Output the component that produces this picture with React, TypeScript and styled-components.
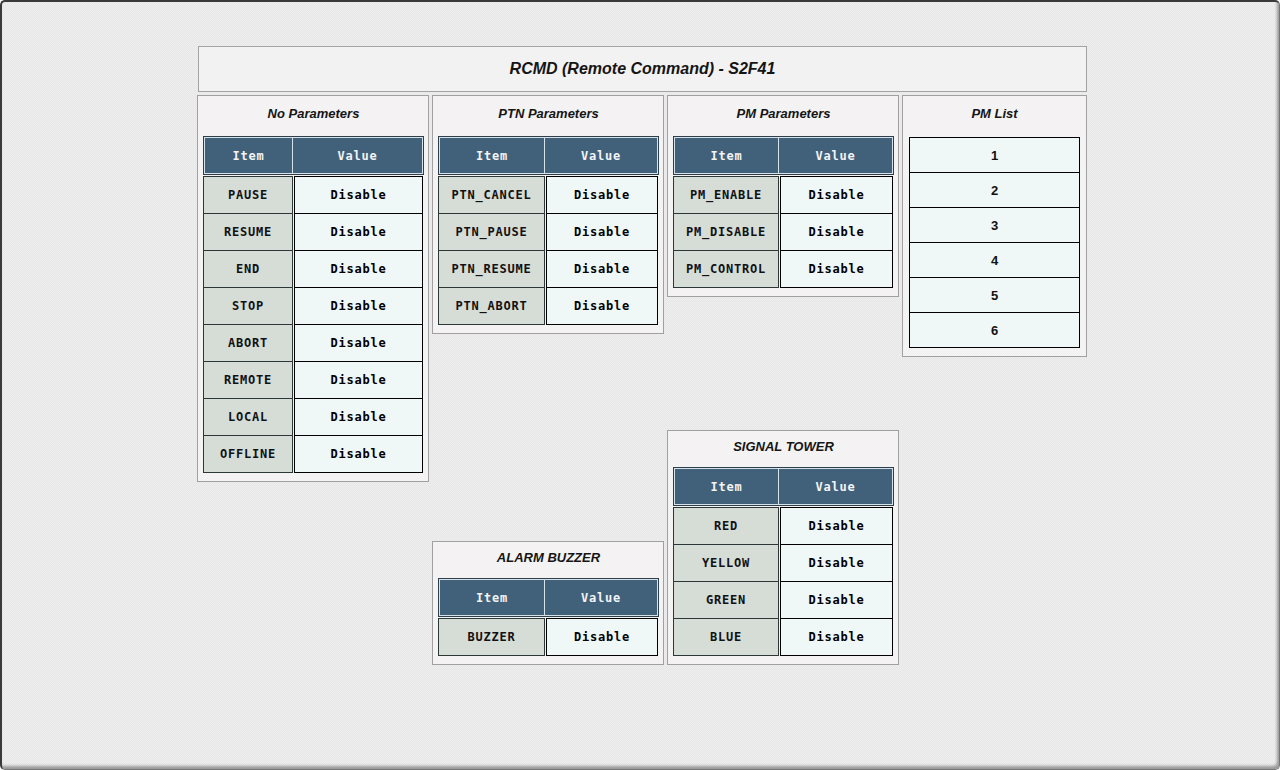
import React from "react";
import styled, { createGlobalStyle } from "styled-components";

const Global = createGlobalStyle`
  html, body { margin: 0; padding: 0; background: #ffffff; }
  * { box-sizing: border-box; }
`;

const Window = styled.div`
  width: 1280px;
  height: 770px;
  border-radius: 5px;
  border-top: 2px solid #3a3a3a;
  border-left: 2px solid #3a3a3a;
  border-right: 1px solid #777;
  border-bottom: 1px solid #777;
  box-shadow: inset -2px -3px 3px rgba(0, 0, 0, 0.35);
  background-color: #ebebeb;
  background-image: repeating-conic-gradient(#e7e7e7 0 25%, #eeeeee 0 50%);
  background-size: 2px 2px;
  padding: 44px 0 0 195px;
  overflow: hidden;
`;

const Main = styled.div`
  width: 890px;
  display: flex;
  flex-direction: column;
  gap: 3px;
`;

const HeaderBox = styled.div`
  margin-left: 1px;
  height: 46px;
  border: 1px solid #a3a3a3;
  background-color: #f3f2f2;
  display: flex;
  align-items: center;
  justify-content: center;
  font-family: "Liberation Sans", Arial, sans-serif;
  font-style: italic;
  font-weight: bold;
  font-size: 16px;
  color: #151515;
`;

const Columns = styled.div`
  display: flex;
  gap: 3px;
  height: 570px;
  align-items: stretch;
`;

const Column = styled.div<{ $w: number }>`
  width: ${(p) => p.$w}px;
  display: flex;
  flex-direction: column;
  justify-content: space-between;
  align-items: stretch;
`;

const Panel = styled.div<{ $pl?: number; $pr?: number }>`
  border: 1px solid #a0a0a0;
  background-color: #f4f2f2;
  background-image: repeating-conic-gradient(#f2f0f0 0 25%, #f6f5f5 0 50%);
  background-size: 2px 2px;
  padding: 0 ${(p) => p.$pr ?? 4}px 8px ${(p) => p.$pl ?? 5}px;
`;

const Title = styled.div<{ $h: number }>`
  height: ${(p) => p.$h}px;
  line-height: ${(p) => p.$h}px;
  margin-bottom: 4px;
  text-align: center;
  font-family: "Liberation Sans", Arial, sans-serif;
  font-style: italic;
  font-weight: bold;
  font-size: 13px;
  color: #151515;
`;

const HeadRow = styled.div`
  display: flex;
  height: 39px;
  border: 1px solid #2f3f4a;
  background: #41607a;
`;

const HeadCell = styled.div<{ $w?: number }>`
  ${(p) => (p.$w ? `width: ${p.$w}px;` : "flex: 1;")}
  border: 1px solid #d6e2ea;
  & + & { border-left: none; }
  display: flex;
  align-items: center;
  justify-content: center;
  font-family: "DejaVu Sans Mono", monospace;
  font-weight: bold;
  font-size: 12px;
  letter-spacing: 0.8px;
  color: #f2f4f6;
`;

const Body = styled.div`
  margin-top: 1px;
  display: flex;
  flex-direction: column;
`;

const Row = styled.div`
  display: flex;
  height: 38px;
  & + & { margin-top: -1px; }
`;

const ItemCell = styled.div<{ $w: number }>`
  width: ${(p) => p.$w}px;
  background: #d6dcd6;
  border: 1px solid #2c3838;
  display: flex;
  align-items: center;
  justify-content: center;
  font-family: "DejaVu Sans Mono", monospace;
  font-weight: bold;
  font-size: 12px;
  letter-spacing: 0.8px;
  color: #111;
`;

const ValueCell = styled.div`
  flex: 1;
  margin-left: 1px;
  margin-right: 1px;
  background: #f0f7f7;
  border: 1px solid #000;
  display: flex;
  align-items: center;
  justify-content: center;
  font-family: "DejaVu Sans Mono", monospace;
  font-weight: bold;
  font-size: 12px;
  letter-spacing: 0.8px;
  color: #000;
`;

const List = styled.div`
  margin-top: 5px;
  display: flex;
  flex-direction: column;
`;

const ListItem = styled.div`
  height: 36px;
  border: 1px solid #000;
  background: #f0f7f7;
  display: flex;
  align-items: center;
  justify-content: center;
  font-family: "Liberation Sans", Arial, sans-serif;
  font-weight: bold;
  font-size: 13px;
  color: #111;
  & + & { margin-top: -1px; }
`;

const Spacer = styled.div`
  flex: 1;
`;

type TableProps = { title: string; items: string[]; itemW: number; titleH?: number };

function ParamTable({ title, items, itemW, titleH = 36 }: TableProps) {
  return (
    <Panel>
      <Title $h={titleH}>{title}</Title>
      <HeadRow>
        <HeadCell $w={itemW - 1}>Item</HeadCell>
        <HeadCell>Value</HeadCell>
      </HeadRow>
      <Body>
        {items.map((it) => (
          <Row key={it}>
            <ItemCell $w={itemW}>{it}</ItemCell>
            <ValueCell>Disable</ValueCell>
          </Row>
        ))}
      </Body>
    </Panel>
  );
}

export default function App() {
  return (
    <>
      <Global />
      <Window>
        <Main>
          <HeaderBox>RCMD (Remote Command) - S2F41</HeaderBox>
          <Columns>
            <Column $w={232}>
              <ParamTable
                title="No Parameters"
                itemW={90}
                items={["PAUSE", "RESUME", "END", "STOP", "ABORT", "REMOTE", "LOCAL", "OFFLINE"]}
              />
              <Spacer />
            </Column>
            <Column $w={232}>
              <ParamTable
                title="PTN Parameters"
                itemW={107}
                items={["PTN_CANCEL", "PTN_PAUSE", "PTN_RESUME", "PTN_ABORT"]}
              />
              <Spacer />
              <ParamTable title="ALARM BUZZER" itemW={107} titleH={32} items={["BUZZER"]} />
            </Column>
            <Column $w={232}>
              <ParamTable
                title="PM Parameters"
                itemW={106}
                items={["PM_ENABLE", "PM_DISABLE", "PM_CONTROL"]}
              />
              <Spacer />
              <ParamTable
                title="SIGNAL TOWER"
                itemW={106}
                titleH={32}
                items={["RED", "YELLOW", "GREEN", "BLUE"]}
              />
            </Column>
            <Column $w={185}>
              <Panel $pl={6} $pr={6}>
                <Title $h={36}>PM List</Title>
                <List>
                  {["1", "2", "3", "4", "5", "6"].map((n) => (
                    <ListItem key={n}>{n}</ListItem>
                  ))}
                </List>
              </Panel>
              <Spacer />
            </Column>
          </Columns>
        </Main>
      </Window>
    </>
  );
}
